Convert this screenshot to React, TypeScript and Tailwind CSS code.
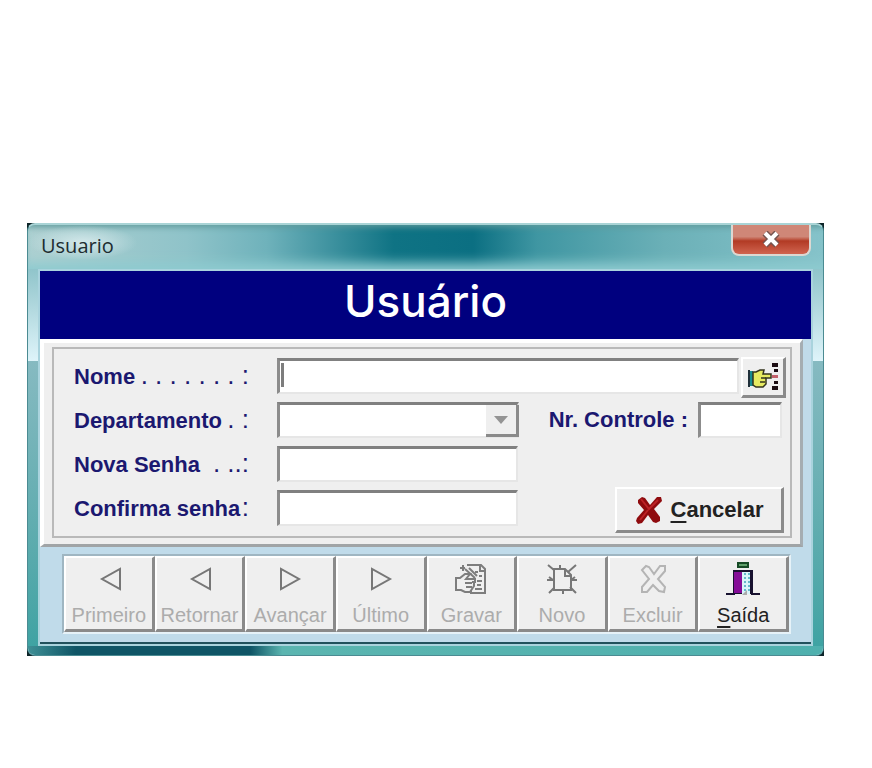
import type { ReactNode } from "react";

const field =
  "h-9 min-w-0 rounded-none border-t-[3px] border-l-[3px] border-r-2 border-b-2 border-t-[#808080] border-l-[#8c8c8c] border-r-[#e6e6e6] border-b-[#e6e6e6] bg-white px-1 text-[21px] text-black outline-none";

const raised =
  "border-t-2 border-l-2 border-r-[3px] border-b-[3px] border-t-white border-l-white border-r-[#8a8a8a] border-b-[#8a8a8a] bg-[#efefef]";

const labelText = "text-[22px] leading-9 font-bold whitespace-nowrap text-[#1b1870]";

interface FieldLabelProps {
  htmlFor: string;
  text: string;
  leader: string;
}

const FieldLabel = ({ htmlFor, text, leader }: FieldLabelProps) => {
  return (
    <label
      htmlFor={htmlFor}
      className={`mr-7 flex w-[175px] shrink-0 items-baseline justify-between ${labelText}`}
    >
      <span>{text}</span>
      <span className="text-[26px] leading-9 font-normal">{leader}</span>
    </label>
  );
};

interface ToolButtonProps {
  label: ReactNode;
  icon: ReactNode;
  disabled?: boolean;
}

const ToolButton = ({ label, icon, disabled }: ToolButtonProps) => {
  return (
    <button
      type="button"
      disabled={disabled}
      className={`flex h-[76px] min-w-0 flex-1 flex-col items-center justify-between pt-[3px] text-[20px] leading-7 ${raised} ${disabled ? "text-[#acacac]" : "text-[#222]"}`}
    >
      {icon}
      <span>{label}</span>
    </button>
  );
};

const PrevIcon = () => (
  <svg width="36" height="36" viewBox="0 0 36 36" fill="none" stroke="#777" strokeWidth="2">
    <path d="M29 8v20L11 18z" />
  </svg>
);

const NextIcon = () => (
  <svg width="36" height="36" viewBox="0 0 36 36" fill="none" stroke="#777" strokeWidth="2">
    <path d="M9 8v20L27 18z" />
  </svg>
);

const SaveIcon = () => (
  <svg width="36" height="36" viewBox="0 0 36 36" fill="none" stroke="#7d7d7d" strokeWidth="2">
    <path d="M14 4h14l4 4v24H18v-3M27 4v6h5" />
    <path d="M3 16v14M3 17h4l5-4h5l-4 5h9v3h-3M3 29h5l4 2h5l2-3 2-3v-4M12 22h7M13 26h6" />
    <path d="M7 7h5M10 4v6M12 8l10 9M16 7l8 8M22 11h3M26 15h3M24 20h5M24 24h4M22 28h7" />
  </svg>
);

const NewIcon = () => (
  <svg width="36" height="36" viewBox="0 0 36 36" fill="none" stroke="#777" strokeWidth="2">
    <path d="M10 8h11l6 6v15H10zM21 8v7h6" />
    <path d="M4 4l6 5M32 4l-8 7M3 19h7M27 19h6M5 32l5-5M32 32l-6-6M16 4v4M19 29v4M5 16l4 3M31 16l-4 3" />
  </svg>
);

const DeleteIcon = () => (
  <svg width="36" height="36" viewBox="0 0 36 36" fill="none" stroke="#b4b4b4" strokeWidth="2">
    <path d="M7 9l4-4 3 1 5 7 6-8h5v5l-7 8 7 8-1 5-5-1-6-6-6 7H7v-5l7-8z" />
  </svg>
);

const ExitIcon = () => (
  <svg width="36" height="36" viewBox="0 0 36 36">
    <path d="M12 1h12v6H12z" fill="#164a25" />
    <path d="M14 3h8v2H14z" fill="#5fa06a" />
    <path d="M8 9h20v24H8z" fill="#17112f" />
    <path d="M9 11h8v21H9z" fill="#850d98" />
    <path d="M17 11h8v22h-8z" fill="#d9f5fb" />
    <path d="M20 12v18M24 12v18" stroke="#65b9cc" strokeWidth="2" strokeDasharray="2 2" />
    <path d="M1 32h9v2H1zM26 32h9v2h-9z" fill="#17112f" />
    <path d="M17 34l5-5v5z" fill="#aaa" />
  </svg>
);

const HandIcon = () => (
  <svg width="34" height="30" viewBox="0 0 34 30">
    <path d="M3 9h4v15H3z" fill="#168b91" />
    <path d="M2 8h2v17H2z" fill="#20303a" />
    <path d="M7 10h3l4-2h4l-1 4h8v4h-5v6l-3 3h-7l-3-2z" fill="#e6ea62" stroke="#33331c" strokeWidth="1.500" />
    <path d="M15 16h5M14 20h5" stroke="#33331c" strokeWidth="1.500" />
    <path d="M26 1h6v4h-6zM28 7h4v3h-4zM28 19h4v3h-4zM26 24h6v4h-6z" fill="#1c0d12" />
    <path d="M26 13h6v3h-6z" fill="#c2606a" />
  </svg>
);

const CancelIcon = () => (
  <svg width="28" height="30" viewBox="0 0 28 30">
    <path
      d="M3 5l4-3 3 1 5 7 7-8h4l1 4-8 8 6 8v4l-4 2-3-1-5-7-6 8-4 1-2-3 1-3 7-8-6-7z"
      fill="#8f0b0e"
    />
    <path d="M6 4l8 10 9-9M13 15l-8 10" fill="none" stroke="#bb2226" strokeWidth="2" />
  </svg>
);

const App = () => {
  return (
    <main className="min-h-screen bg-white pt-[223px] pr-12 pl-[27px] font-['Liberation_Sans',Arial,sans-serif]">
      <div className="bg-[#0d2428]">
        <section className="overflow-hidden rounded-lg border border-t-2 border-[#4b8b92] border-t-[#a9d4d6] bg-linear-to-b from-[#8fc4ca] from-10% via-[#e0f5fb] via-32% to-[#e0f5fb] to-32%">
          <header className="flex h-[44px] items-start justify-between bg-[linear-gradient(90deg,#aed0d1,#8fc3c9_20%,#6fb2bb_30%,#0f7384_46%,#0b6f82_56%,#3f96a2_64%,#6bb0b7_80%,#86c3ca)] pr-3 shadow-[inset_0_-12px_12px_-6px_#8ecbd0,inset_0_6px_6px_-4px_#5f9a9b]">
            <h1 className="rounded-full bg-radial from-[#d3e8ea] to-transparent to-70% pt-[7px] pr-6 pl-[13px] font-['Open_Sans',sans-serif] text-[20px] leading-7 text-[#202c30]">
              Usuario
            </h1>
            <button
              type="button"
              aria-label="Fechar"
              className="flex h-[31px] w-[80px] items-center justify-center rounded-b-lg border-2 border-t-0 border-[#dcd8d2] bg-linear-to-b from-[#cf8777] from-40% via-[#b23a24] via-55% to-[#d0644f]"
            >
              <svg width="22" height="18" viewBox="0 0 22 18">
                <path d="M5 2l12 12M17 2L5 14" stroke="#74534f" strokeWidth="7" />
                <path d="M5 2l12 12M17 2L5 14" stroke="#fff" strokeWidth="4" />
              </svg>
            </button>
          </header>
          <div className="bg-linear-to-b from-transparent from-[92px] via-[#86bac1] via-[92px] to-[#3fa3a3] px-[10px]">
            <div className="border-2 border-[#a9d3dd] bg-[#c0dbea]">
              <div className="border-b-2 border-[#21515c]">
                <h2 className="h-[68px] bg-[#00007f] text-center font-['Inter',sans-serif] text-[44px] leading-[60px] font-medium text-white">
                  Usuário
                </h2>
                <form className="mr-2 border-t-4 border-r-[3px] border-b-[3px] border-l-4 border-t-white border-r-[#a5adb2] border-b-[#a0a4a6] border-l-white bg-[#efefef] px-2 pt-1 pb-[6px]">
                  <div className="border-2 border-[#b9b9b9] pt-[5px] pr-1 pb-[3px] pl-5">
                    <div className="flex h-11 items-center">
                      <FieldLabel htmlFor="nome" text="Nome" leader=". . . . . . . :" />
                      <div className="relative flex h-9 min-w-0 flex-1">
                        <input id="nome" className={`w-full ${field}`} />
                        <span className="pointer-events-none absolute top-[5px] left-1 h-6 w-[3px] bg-[#7d7d7d]" />
                      </div>
                      <button
                        type="button"
                        aria-label="Localizar"
                        className={`ml-[2px] flex h-[41px] w-[45px] items-center justify-center self-end ${raised}`}
                      >
                        <HandIcon />
                      </button>
                    </div>
                    <div className="flex h-11 items-center">
                      <FieldLabel htmlFor="departamento" text="Departamento" leader=". :" />
                      <div className="relative w-[242px]">
                        <select id="departamento" disabled className={`block w-full appearance-none opacity-100 ${field}`} />
                        <span className="pointer-events-none absolute top-[3px] right-0 flex h-8 w-[33px] items-center justify-center border-r-[3px] border-b-[3px] border-[#8a8a8a] bg-[#efefef]">
                          <svg width="14" height="8" viewBox="0 0 14 8">
                            <path d="M0 0h14L7 8z" fill="#949494" />
                          </svg>
                        </span>
                      </div>
                      <div className="mr-1 ml-auto flex items-center">
                        <label htmlFor="controle" className={`mr-[10px] ${labelText}`}>
                          Nr. Controle :
                        </label>
                        <input id="controle" className={`w-[84px] ${field}`} />
                      </div>
                    </div>
                    <div className="flex h-11 items-center">
                      <FieldLabel htmlFor="senha" text="Nova Senha" leader=". ..:" />
                      <input id="senha" type="password" className={`w-[241px] ${field}`} />
                    </div>
                    <div className="flex h-[47px] items-end justify-between">
                      <div className="flex h-11 items-center self-start">
                        <FieldLabel htmlFor="confirma" text="Confirma senha" leader=":" />
                        <input id="confirma" type="password" className={`w-[241px] ${field}`} />
                      </div>
                      <button
                        type="button"
                        className={`mr-[2px] flex h-[46px] w-[169px] items-center justify-center gap-2 text-[22px] leading-7 font-bold text-[#222] ${raised}`}
                      >
                        <CancelIcon />
                        <span>
                          <u className="underline-offset-4">C</u>ancelar
                        </span>
                      </button>
                    </div>
                  </div>
                </form>
                <div className="mt-[7px] mr-5 mb-2 ml-[22px] flex border-2 border-t-[#9fb6c2] border-r-[#e6f2f8] border-b-[#e6f2f8] border-l-[#9fb6c2]">
                  <ToolButton disabled label="Primeiro" icon={<PrevIcon />} />
                  <ToolButton disabled label="Retornar" icon={<PrevIcon />} />
                  <ToolButton disabled label="Avançar" icon={<NextIcon />} />
                  <ToolButton disabled label="Último" icon={<NextIcon />} />
                  <ToolButton disabled label="Gravar" icon={<SaveIcon />} />
                  <ToolButton disabled label="Novo" icon={<NewIcon />} />
                  <ToolButton disabled label="Excluir" icon={<DeleteIcon />} />
                  <ToolButton
                    label={
                      <>
                        <u className="decoration-2 underline-offset-4">S</u>aída
                      </>
                    }
                    icon={<ExitIcon />}
                  />
                </div>
              </div>
            </div>
          </div>
          <footer className="h-[9px] bg-[linear-gradient(90deg,#3f9096,#0f5566_6%,#0f5566_28%,#5bb5b0_32%,#4fb0ae)]" />
        </section>
      </div>
    </main>
  );
};

export default App;
